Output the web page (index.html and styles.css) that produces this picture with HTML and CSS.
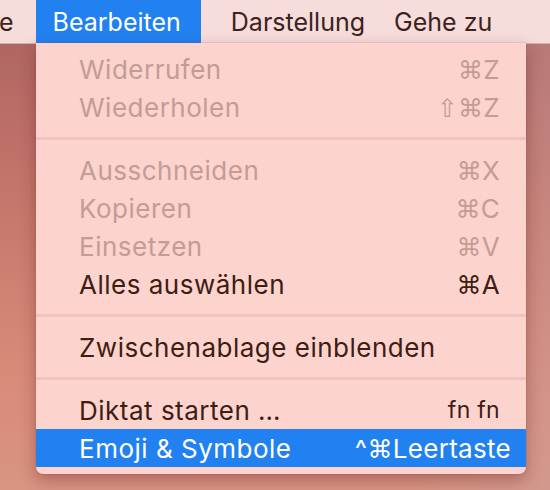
FILE: index.html
```html
<!DOCTYPE html>
<html lang="de">
<head>
<meta charset="utf-8">
<title>Bearbeiten</title>
<link rel="stylesheet" href="styles.css">
</head>
<body>
<div class="screen">
  <div class="menubar">
    <span class="mb-item mb-cut">e</span>
    <span class="mb-item mb-active">Bearbeiten</span>
    <span class="mb-item mb-dar">Darstellung</span>
    <span class="mb-item mb-gehe">Gehe zu</span>
  </div>
  <div class="desktop">
    <div class="menu">
      <div class="row disabled"><span class="label">Widerrufen</span><span class="key"><span class="sym">⌘</span>Z</span></div>
      <div class="row disabled"><span class="label">Wiederholen</span><span class="key"><span class="sym">⇧⌘</span>Z</span></div>
      <div class="sep"></div>
      <div class="row disabled"><span class="label">Ausschneiden</span><span class="key"><span class="sym">⌘</span>X</span></div>
      <div class="row disabled"><span class="label">Kopieren</span><span class="key"><span class="sym">⌘</span>C</span></div>
      <div class="row disabled"><span class="label">Einsetzen</span><span class="key"><span class="sym">⌘</span>V</span></div>
      <div class="row"><span class="label">Alles auswählen</span><span class="key"><span class="sym">⌘</span>A</span></div>
      <div class="sep"></div>
      <div class="row"><span class="label">Zwischenablage einblenden</span></div>
      <div class="sep"></div>
      <div class="row"><span class="label">Diktat starten …</span><span class="key key-small">fn fn</span></div>
      <div class="row selected"><span class="label">Emoji &amp; Symbole</span><span class="key key-wide">^<span class="sym">⌘</span>Leertaste</span></div>
    </div>
  </div>
</div>
</body>
</html>
```

FILE: styles.css
```css
* { box-sizing: border-box; }
html, body { margin: 0; padding: 0; }
body {
  width: 550px;
  height: 490px;
  overflow: hidden;
  font-family: Inter, "Noto Sans", sans-serif;
  font-size: 26px;
  color: #3d1d14;
}
.screen {
  width: 550px;
  height: 490px;
  display: flex;
  flex-direction: column;
  background:
    linear-gradient(90deg, rgba(0,0,0,0) 70%, rgba(200,160,160,0.35) 100%),
    linear-gradient(180deg, #a9625f 0%, #c2736a 35%, #d88a79 75%, #d99483 100%);
}
.menubar {
  height: 44px;
  flex: none;
  display: flex;
  align-items: stretch;
  background: #f6dcdb;
  border-bottom: 1px solid #d7aeac;
  font-size: 25px;
}
.mb-item {
  display: flex;
  align-items: center;
  padding: 0 17px;
  color: #3b231d;
}
.mb-cut { padding: 0; margin-left: -1px; margin-right: 22px; }
.mb-active { background: #2281f1; color: #fff; padding: 0 20px 0 17px; }
.mb-dar { margin-left: 13px; padding-right: 10px; }
.mb-gehe { margin-left: 2px; }
.desktop {
  flex: 1;
  padding-left: 36px;
}
.menu {
  width: 490px;
  margin-top: -1px;
  padding: 7px 0 7px;
  background: #fdd3cd;
  border-radius: 0 0 7px 7px;
  box-shadow: 0 6px 16px rgba(90, 20, 20, 0.35), 0 0 0 1px rgba(150, 80, 80, 0.12);
}
.row {
  height: 38px;
  display: flex;
  align-items: center;
  justify-content: space-between;
  padding: 0 26px 0 43px;
  color: #3d1d14;
  letter-spacing: 0.5px;
}
.row.disabled { color: #c39c98; }
.row.selected { background: #2281f1; color: #fff; padding-right: 15px; }
.key { letter-spacing: 0.3px; }
.sym { font-family: "DejaVu Sans", sans-serif; font-size: 25px; }
.key-small { font-size: 23px; }
.sep {
  height: 25px;
  display: flex;
  align-items: center;
}
.sep::before {
  content: "";
  display: block;
  width: 100%;
  height: 3px;
  background: #f0c3bd;
}
```
